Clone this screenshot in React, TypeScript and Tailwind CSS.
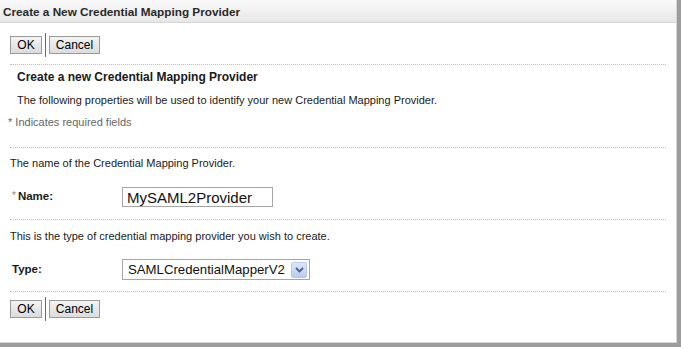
import React from 'react';

const font = { fontFamily: '"Liberation Sans", Arial, sans-serif' };

const Buttons: React.FC = () => (
  <div className="flex items-center h-[24px] pl-[10px]">
    <button className="h-[18px] w-[32px] border border-[#9a9a9a] bg-gradient-to-b from-[#f4f4f4] to-[#dcdcdc] text-[12px] leading-none text-black">
      OK
    </button>
    <div className="mx-[3px] h-[24px] w-px bg-[#6a6a6a]"></div>
    <button className="h-[18px] w-[51px] border border-[#9a9a9a] bg-gradient-to-b from-[#f4f4f4] to-[#dcdcdc] text-[12px] leading-none text-black">
      Cancel
    </button>
  </div>
);

const Divider: React.FC<{ className?: string }> = ({ className = '' }) => (
  <div className={`mx-[10px] h-px shrink-0 border-t border-dotted border-[#bdbdbd] ${className}`}></div>
);

export default function App() {
  return (
    <div className="w-[681px] h-[347px] bg-[#9c9c9c] text-[11px] leading-[17px] text-[#1a1a1a]" style={font}>
      <div className="w-[677px] h-[343px] bg-white border-r border-b border-[#d6d6d6] flex flex-col">
        {/* Title bar */}
        <div className="h-[23px] shrink-0 flex items-center pl-[3px] bg-gradient-to-b from-[#fafafa] to-[#e6e7e6] border-b border-[#d4d4d4]">
          <span className="font-bold text-[11.75px] leading-[17px] text-[#2a2a2a]">Create a New Credential Mapping Provider</span>
        </div>

        <div className="mt-[10px]">
          <Buttons />
        </div>

        <Divider className="mt-[7px]" />

        <div className="pl-[17px] mt-[4px] h-[17px] font-bold text-[12px] leading-[17px]">
          Create a new Credential Mapping Provider
        </div>
        <div className="pl-[17px] mt-[6px] h-[17px]">
          The following properties will be used to identify your new Credential Mapping Provider.
        </div>
        <div className="pl-[8px] mt-[5px] h-[17px] text-[#666666]">
          * Indicates required fields
        </div>

        <Divider className="mt-[16px]" />

        <div className="pl-[10px] mt-[7px] h-[17px]">
          The name of the Credential Mapping Provider.
        </div>

        <div className="flex items-center mt-[15px] h-[20px]">
          <div className="w-[122px] pl-[12px] pb-[3px] flex items-center">
            <span className="text-[#888888] text-[10px] mr-[2px] leading-none">*</span>
            <span className="font-bold text-[11.5px] leading-[14px]">Name:</span>
          </div>
          <div className="w-[151px] h-[20px] border border-[#a6a6a6] flex items-center pl-[4px] text-[15px] leading-none text-[#111111]">
            MySAML2Provider
          </div>
        </div>

        <Divider className="mt-[12px]" />

        <div className="pl-[10px] mt-[8px] h-[17px]">
          This is the type of credential mapping provider you wish to create.
        </div>

        <div className="flex items-center mt-[14px] h-[21px]">
          <div className="w-[122px] pl-[12px] pb-[2px] font-bold text-[11.5px] leading-[14px]">Type:</div>
          <div className="w-[188px] h-[21px] border border-[#a6a6a6] flex items-center justify-between pl-[5px] pr-[2px] text-[13.2px] leading-none text-[#111111]">
            <span>SAMLCredentialMapperV2</span>
            <div className="w-[16px] h-[16px] rounded-[2px] border border-[#b8c8ee] bg-gradient-to-b from-[#dde7fb] to-[#b9cbf3] flex items-center justify-center">
              <svg width="9" height="6" viewBox="0 0 9 6">
                <path d="M1 1 L4.5 4.5 L8 1" stroke="#4d6185" strokeWidth="1.8" fill="none" />
              </svg>
            </div>
          </div>
        </div>

        <Divider className="mt-[11px]" />

        <div className="mt-[5px]">
          <Buttons />
        </div>
      </div>
    </div>
  );
}
